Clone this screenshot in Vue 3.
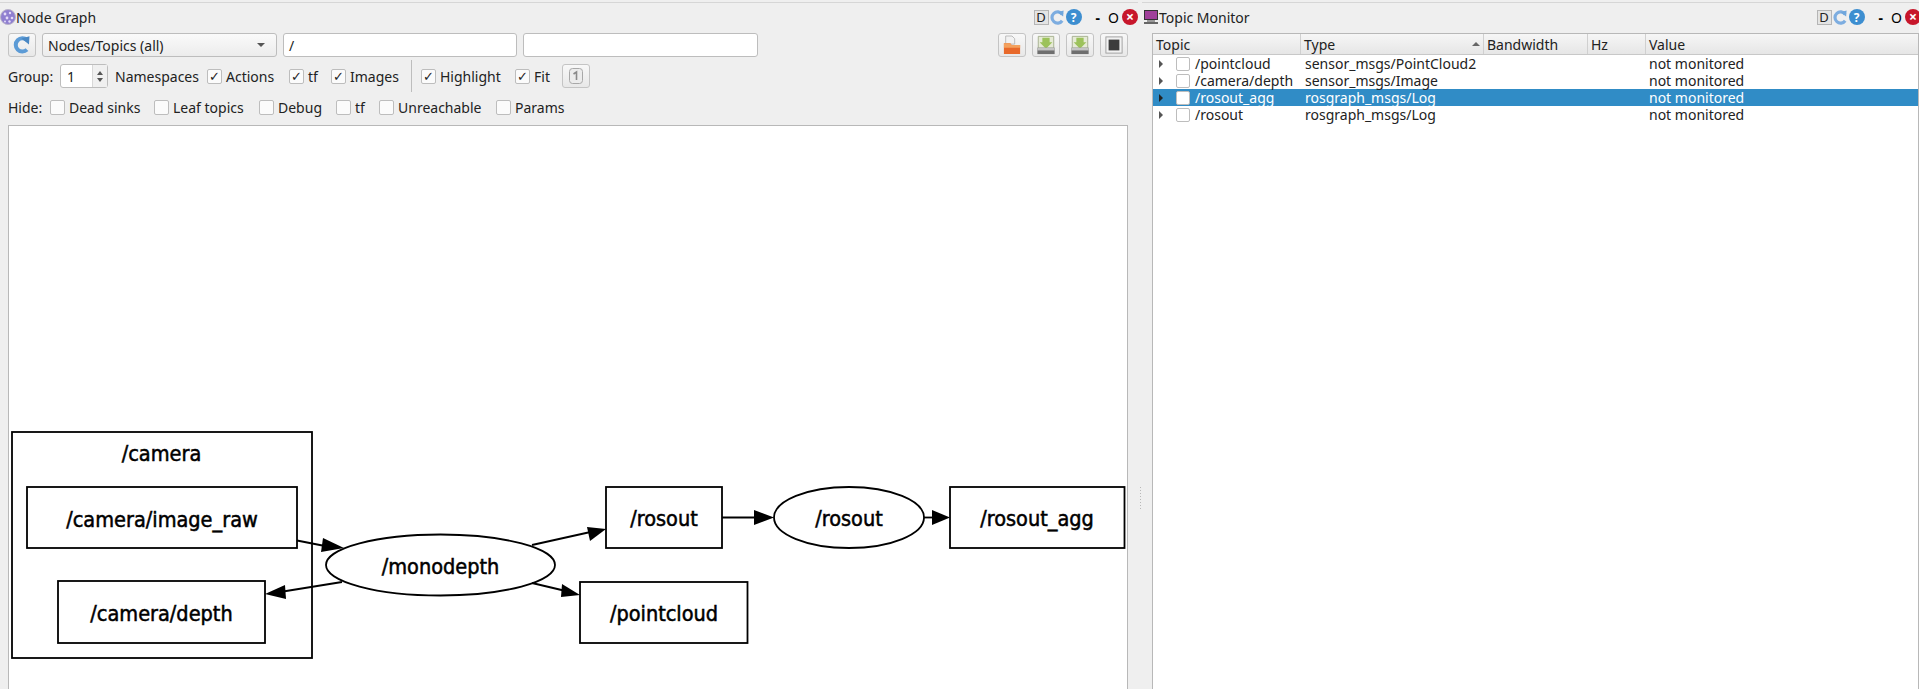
<template>
  <div class="app">
    <section class="panel left">
      <header class="titlebar">
        <svg class="win-icon" viewBox="0 0 16 16" width="16" height="16">
          <circle cx="8" cy="8" r="7.5" fill="#8f7fd0" stroke="#b9b3c9" />
          <circle cx="5" cy="5" r="1.4" fill="#e4dcf7" />
          <circle cx="10" cy="4" r="1.2" fill="#e4dcf7" />
          <circle cx="12" cy="9" r="1.3" fill="#e4dcf7" />
          <circle cx="7" cy="9" r="1.4" fill="#e4dcf7" />
          <circle cx="5" cy="12.5" r="1" fill="#e4dcf7" />
          <circle cx="9.5" cy="12.5" r="1.2" fill="#e4dcf7" />
        </svg>
        <span class="title">Node Graph</span>
        <WinButtons />
      </header>

      <div class="row row-one">
        <button class="tool refresh">
          <svg viewBox="0 0 20 20" width="20" height="20">
            <path d="M15 5.2A6.6 6.6 0 1 0 15 14.6" fill="none" stroke="#5c9bd6" stroke-width="4" />
            <path d="M9.5 3.6 L17.5 1.2 L17 9.5 Z" fill="#4a88c4" />
          </svg>
        </button>
        <div class="combo">
          <span>Nodes/Topics (all)</span>
          <i class="caret"></i>
        </div>
        <div class="input first">/</div>
        <div class="input second"></div>
        <div class="tools">
          <button class="tool">
            <svg viewBox="0 0 20 22" width="18" height="20">
              <path d="M3 1h7l3 3v6H3z" fill="#f2f2f2" stroke="#b5b5b5" />
              <path d="M1 9h7l1.5 2H19v10H1z" fill="#e8692a" />
              <path d="M1 9h7l1.5 2H19v3H1z" fill="#f3a15e" />
            </svg>
          </button>
          <button v-for="n in 2" :key="n" class="tool">
            <svg viewBox="0 0 22 22" width="20" height="20">
              <path d="M2.5 1.5h17v13h-17z" fill="#e6ebd6" stroke="#a3ad8c" />
              <path d="M7 3h8v5h3l-7 7-7-7h3z" fill="#9cc25a" />
              <path d="M1.5 14h19v7h-19z" fill="#6e6e6e" />
              <path d="M1.5 14h19v3h-19z" fill="#c4c4c4" />
            </svg>
          </button>
          <button class="tool">
            <svg viewBox="0 0 20 20" width="18" height="18">
              <rect x="1" y="1" width="18" height="18" fill="#f2f2f2" stroke="#9c9c9c" />
              <rect x="4" y="4" width="12" height="12" fill="#3c3c3c" />
            </svg>
          </button>
        </div>
      </div>

      <div class="row row-two">
        <span class="label group">Group:</span>
        <div class="spin">
          <span>1</span>
          <div class="arrows"><i class="up"></i><i class="down"></i></div>
        </div>
        <span class="label namespaces">Namespaces</span>
        <label v-for="c in options" :key="c.text" class="check" :style="{ width: c.w + 'px' }">
          <i class="box">✓</i>{{ c.text }}
        </label>
        <span class="sep"></span>
        <label v-for="c in options2" :key="c.text" class="check" :style="{ width: c.w + 'px' }">
          <i class="box">✓</i>{{ c.text }}
        </label>
        <button class="tool fit">
          <svg viewBox="0 0 14 16" width="14" height="16">
            <rect x="0.5" y="0.5" width="13" height="15" rx="3" fill="#ececec" stroke="#a8a8a8" />
            <path d="M4.5 6l3-2v8" fill="none" stroke="#8a8a8a" stroke-width="1.6" />
          </svg>
        </button>
      </div>

      <div class="row row-three">
        <span class="label hide">Hide:</span>
        <label v-for="c in hides" :key="c.text" class="check" :style="{ width: c.w + 'px' }">
          <i class="box"></i>{{ c.text }}
        </label>
      </div>

      <div class="graph">
        <svg class="dot" viewBox="8 125 1120 564" width="1120" height="564">
          <g fill="#fff" stroke="#000" stroke-width="1.8">
            <rect x="12" y="432" width="300" height="226" />
            <rect x="27" y="487" width="270" height="61" />
            <rect x="58" y="581" width="207" height="62" />
            <ellipse cx="440.5" cy="565" rx="114.5" ry="30.5" />
            <rect x="606" y="487" width="116" height="61" />
            <ellipse cx="849" cy="517.5" rx="75" ry="30.5" />
            <rect x="950" y="487" width="174.5" height="61" />
            <rect x="580" y="582" width="167.5" height="61" />
          </g>
          <g stroke="#000" stroke-width="1.8">
            <line x1="297" y1="540.5" x2="330" y2="547" />
            <line x1="342" y1="582" x2="280" y2="592" />
            <line x1="532" y1="545" x2="595" y2="531" />
            <line x1="532" y1="583" x2="570" y2="592" />
            <line x1="722" y1="517.5" x2="760" y2="517.5" />
            <line x1="924" y1="517.5" x2="936" y2="517.5" />
          </g>
          <g fill="#000">
            <polygon points="344,548 323,538 321,552" />
            <polygon points="265,594 285,585 286,599" />
            <polygon points="606,529 587,527 590,541" />
            <polygon points="580,595 562,584 561,597" />
            <polygon points="774,517.5 754,510 754,525" />
            <polygon points="950,517.5 932,510 932,525" />
          </g>
          <g class="dot-text" text-anchor="middle" dominant-baseline="central">
            <text x="161.5" y="453">/camera</text>
            <text x="162" y="519">/camera/image_raw</text>
            <text x="161.5" y="613">/camera/depth</text>
            <text x="440.5" y="566">/monodepth</text>
            <text x="664" y="518">/rosout</text>
            <text x="849" y="518">/rosout</text>
            <text x="1037" y="518">/rosout_agg</text>
            <text x="664" y="613">/pointcloud</text>
          </g>
        </svg>
      </div>
    </section>

    <div class="splitter"><i v-for="n in 8" :key="n"></i></div>

    <section class="panel right">
      <header class="titlebar">
        <svg class="win-icon" viewBox="0 0 16 16" width="16" height="16">
          <rect x="1" y="1" width="14" height="10" fill="#333" />
          <rect x="2" y="2" width="12" height="8" fill="#a0409a" />
          <path d="M4 11h8v2H4z" fill="#999" />
          <path d="M1 13h14v2H1z" fill="#666" />
        </svg>
        <span class="title">Topic Monitor</span>
        <WinButtons />
      </header>

      <div class="tree">
        <div class="tree-head">
          <span class="col c-topic">Topic</span>
          <span class="col c-type">Type<i class="sort"></i></span>
          <span class="col c-band">Bandwidth</span>
          <span class="col c-hz">Hz</span>
          <span class="col c-value">Value</span>
        </div>
        <div v-for="t in topics" :key="t.name" class="tree-row" :class="{ selected: t.selected }">
          <span class="c-topic cell-topic">
            <i class="expander"></i><i class="box"></i>{{ t.name }}
          </span>
          <span class="c-type cell">{{ t.type }}</span>
          <span class="c-band"></span>
          <span class="c-hz"></span>
          <span class="c-value cell value">not monitored</span>
        </div>
      </div>
    </section>
  </div>
</template>

<script setup>
import { h } from 'vue'

// title bar buttons are the same in both plugins
const WinButtons = () =>
  h('div', { class: 'win-buttons' }, [
    h('span', { class: 'd-btn' }, 'D'),
    h('svg', { viewBox: '0 0 16 16', width: 15, height: 15 }, [
      h('path', { d: 'M13 4.5A6 6 0 1 0 13 11.5', fill: 'none', stroke: '#7dade0', 'stroke-width': 3.4 }),
      h('path', { d: 'M8 2.5L14.5 0.5L14 7Z', fill: '#6fa6dc' }),
    ]),
    h('span', { class: 'help' }, '?'),
    h('span', { class: 'min' }, '-'),
    h('span', { class: 'max' }, 'O'),
    h('span', { class: 'close' }, '×'),
  ])

const options = [
  { text: 'Actions', w: 82 },
  { text: 'tf', w: 42 },
  { text: 'Images', w: 74 },
]
const options2 = [
  { text: 'Highlight', w: 94 },
  { text: 'Fit', w: 47 },
]
const hides = [
  { text: 'Dead sinks', w: 104 },
  { text: 'Leaf topics', w: 105 },
  { text: 'Debug', w: 77 },
  { text: 'tf', w: 43 },
  { text: 'Unreachable', w: 117 },
  { text: 'Params', w: 70 },
]
const topics = [
  { name: '/pointcloud', type: 'sensor_msgs/PointCloud2' },
  { name: '/camera/depth', type: 'sensor_msgs/Image' },
  { name: '/rosout_agg', type: 'rosgraph_msgs/Log', selected: true },
  { name: '/rosout', type: 'rosgraph_msgs/Log' },
]
</script>

<style>
html,
body {
  margin: 0;
  overflow: hidden;
  background: #efefef;
}
</style>

<style scoped>
.app {
  display: flex;
  width: 1919px;
  height: 689px;
  overflow: hidden;
  box-sizing: border-box;
  padding-top: 2px;
  background: #efefef;
  font-family: 'Noto Sans', sans-serif;
  font-size: 14px;
  color: #222;
}

.panel {
  display: flex;
  flex-direction: column;
  box-sizing: border-box;
  border-top: 1px solid #d6d6d6;
}

.left {
  flex: none;
  width: 1138px;
}

.right {
  flex: 1;
  min-width: 0;
}

.titlebar {
  display: flex;
  align-items: center;
  height: 28px;
  flex: none;
}

.win-icon {
  flex: none;
}

.right .win-icon {
  margin-left: 1px;
}

.row {
  display: flex;
  align-items: center;
  flex: none;
  padding-left: 8px;
}

.row-one {
  height: 24px;
  margin-top: 2px;
}

.row-two {
  height: 24px;
  margin-top: 7px;
}

.row-three {
  height: 16px;
  margin-top: 11px;
}

.tool {
  display: flex;
  align-items: center;
  justify-content: center;
  box-sizing: border-box;
  width: 28px;
  height: 24px;
  padding: 0;
  border: 1px solid #c4c4c4;
  border-radius: 3px;
  background: linear-gradient(#f8f8f8, #e8e8e8);
}

.combo,
.input {
  display: flex;
  align-items: center;
  box-sizing: border-box;
  height: 24px;
  padding: 0 5px;
  border: 1px solid #bdbdbd;
  border-radius: 3px;
  background: #fff;
}

.combo {
  justify-content: space-between;
  width: 235px;
  margin-left: 6px;
  background: linear-gradient(#fafafa, #ececec);
}

.caret {
  width: 0;
  height: 0;
  margin-right: 6px;
  border-left: 4px solid transparent;
  border-right: 4px solid transparent;
  border-top: 4px solid #555;
}

.input.first {
  width: 234px;
  margin-left: 6px;
}

.input.second {
  width: 235px;
  margin-left: 6px;
}

.tools {
  display: flex;
  gap: 6px;
  margin-left: 240px;
}

.group {
  width: 52px;
}

.spin {
  display: flex;
  align-items: center;
  justify-content: space-between;
  box-sizing: border-box;
  width: 48px;
  height: 24px;
  padding-left: 6px;
  border: 1px solid #bdbdbd;
  border-radius: 3px;
  background: #fff;
}

.arrows {
  display: flex;
  flex-direction: column;
  justify-content: center;
  gap: 3px;
  width: 14px;
  height: 100%;
  align-items: center;
  border-left: 1px solid #d8d8d8;
  background: #f0f0f0;
}

.arrows i {
  width: 0;
  height: 0;
  border-left: 3px solid transparent;
  border-right: 3px solid transparent;
}

.arrows .up {
  border-bottom: 4px solid #555;
}

.arrows .down {
  border-top: 4px solid #555;
}

.namespaces {
  width: 92px;
  margin-left: 7px;
}

.check {
  display: flex;
  align-items: center;
  flex: none;
  white-space: nowrap;
}

.box {
  display: flex;
  align-items: center;
  justify-content: center;
  box-sizing: border-box;
  flex: none;
  width: 15px;
  height: 15px;
  margin-right: 4px;
  border: 1px solid #bdbdbd;
  border-radius: 2px;
  background: #fbfbfb;
  font-family: 'DejaVu Sans', sans-serif;
  font-style: normal;
  font-size: 13px;
  font-weight: 700;
  line-height: 1;
  color: #222;
}

.sep {
  flex: none;
  width: 1px;
  height: 32px;
  margin: 0 9px 0 6px;
  background: #bdbdbd;
}

.hide {
  width: 42px;
}

.graph {
  flex: 1;
  min-height: 0;
  box-sizing: border-box;
  width: 1120px;
  margin: 10px 0 0 8px;
  border: 1px solid #b8b8b8;
  border-bottom: 0;
  background: #fff;
  overflow: hidden;
}

.dot {
  display: block;
  margin: -1px;
}

.dot-text {
  font-family: 'DejaVu Sans Condensed', 'DejaVu Sans', sans-serif;
  font-size: 21.5px;
  fill: #000;
  stroke: #000;
  stroke-width: 0.5px;
}

.splitter {
  display: flex;
  flex-direction: column;
  justify-content: center;
  gap: 2px;
  align-items: center;
  flex: none;
  width: 4px;
  padding-top: 305px;
  box-sizing: border-box;
  height: 100%;
}

.splitter i {
  width: 1px;
  height: 1px;
  background: #b8b8b8;
}

.win-buttons {
  display: flex;
  align-items: center;
  margin-left: auto;
  flex: none;
}

.right .win-buttons {
  margin-right: -2px;
}

.tree {
  flex: 1;
  box-sizing: border-box;
  margin: 2px 0 0 10px;
  border: 1px solid #b8b8b8;
  border-bottom: 0;
  background: #fff;
  overflow: hidden;
}

.tree-head {
  display: flex;
  align-items: center;
  height: 20px;
  border-bottom: 1px solid #c8c8c8;
  background: linear-gradient(#f6f6f6, #e6e6e6);
}

.tree-row {
  display: flex;
  align-items: center;
  height: 17px;
}

.tree-row.selected {
  background: #308cc6;
  color: #fff;
}

.col {
  box-sizing: border-box;
  height: 100%;
  display: flex;
  align-items: center;
  padding-left: 3px;
  border-right: 1px solid #d0d0d0;
}

.c-topic {
  width: 148px;
  flex: none;
}

.c-type {
  width: 183px;
  flex: none;
}

.c-band {
  width: 104px;
  flex: none;
}

.c-hz {
  width: 58px;
  flex: none;
}

.c-value {
  flex: 1;
}

.col.c-value {
  border-right: 0;
}

.sort {
  margin-left: auto;
  margin-right: 3px;
  width: 0;
  height: 0;
  border-left: 4px solid transparent;
  border-right: 4px solid transparent;
  border-bottom: 4px solid #666;
}

.cell {
  box-sizing: border-box;
  padding-left: 4px;
  white-space: nowrap;
}

.cell.value {
  padding-left: 3px;
}

.cell-topic {
  display: flex;
  align-items: center;
  white-space: nowrap;
}

.expander {
  flex: none;
  width: 0;
  height: 0;
  margin: 0 13px 0 6px;
  border-top: 4px solid transparent;
  border-bottom: 4px solid transparent;
  border-left: 4px solid #555;
}

.selected .expander {
  border-left-color: #222;
}

.cell-topic .box {
  width: 14px;
  height: 14px;
  margin-right: 5px;
  background: #fff;
}

:deep(.d-btn) {
  display: flex;
  align-items: center;
  justify-content: center;
  box-sizing: border-box;
  width: 15px;
  height: 15px;
  margin-right: 1px;
  border: 1px solid #b5b5b5;
  background: #e4e4e4;
  font-size: 13px;
}

:deep(.help) {
  display: flex;
  align-items: center;
  justify-content: center;
  width: 16px;
  height: 16px;
  margin-left: 1px;
  border-radius: 50%;
  background: #3d8ed0;
  color: #fff;
  font-size: 12px;
  font-weight: 700;
}

:deep(.min) {
  margin-left: 14px;
  color: #000;
  font-weight: 700;
}

:deep(.max) {
  margin-left: 8px;
  color: #000;
}

:deep(.close) {
  display: flex;
  align-items: center;
  justify-content: center;
  width: 16px;
  height: 16px;
  margin-left: 3px;
  border-radius: 50%;
  background: #c7162b;
  color: #fff;
  font-size: 14px;
  font-weight: 700;
  line-height: 1;
}
</style>
